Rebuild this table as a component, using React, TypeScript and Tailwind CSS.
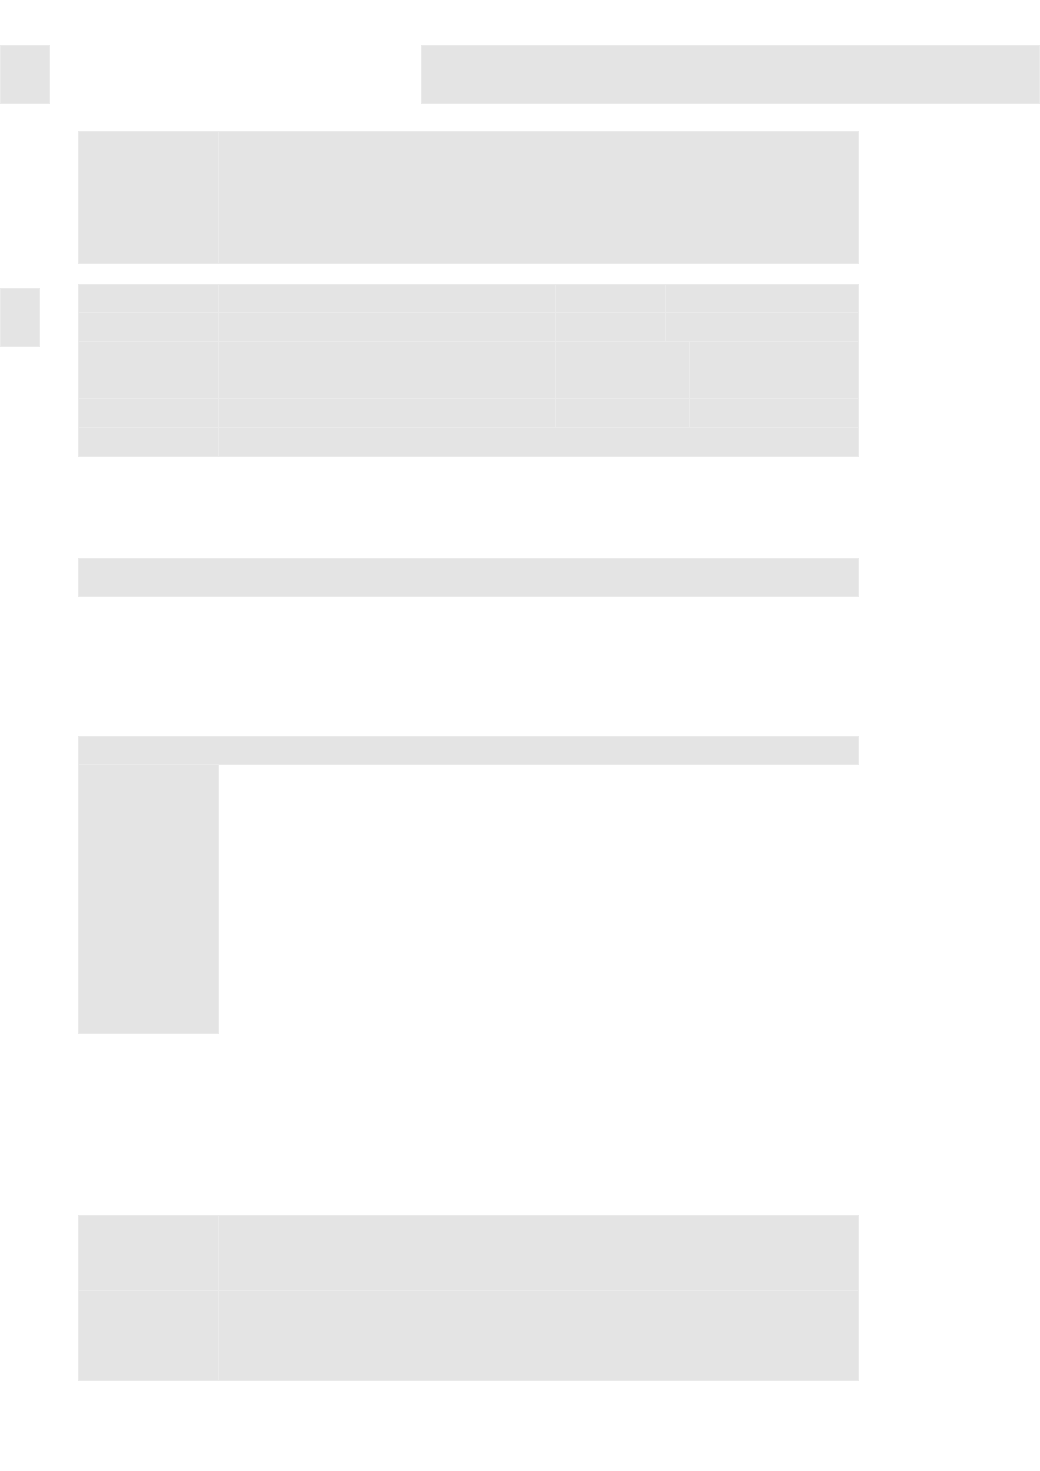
const cell = "bg-[#e4e4e4] border-[#eaeaea]";

export default function App() {
  return (
    <div className="min-h-[1471px] w-[1040px] bg-white pt-[45px]">
      {/* Top bar placeholders */}
      <div className="flex h-[59px] justify-between">
        <div className={`w-[50px] border ${cell}`} />
        <div className={`w-[619px] border ${cell}`} />
      </div>

      {/* Hero block */}
      <div className={`ml-[78px] mt-[27px] flex h-[133px] w-[781px] border ${cell}`}>
        <div className={`w-[140px] border-r ${cell}`} />
        <div className="flex-1" />
      </div>

      {/* Table with side marker */}
      <div className="mt-[20px] flex items-start gap-[38px]">
        <div className={`mt-[4px] h-[59px] w-[40px] border ${cell}`} />
        <div className={`flex w-[781px] flex-col border ${cell}`}>
          <div className={`flex h-[28px] border-b ${cell}`}>
            <div className={`w-[140px] border-r ${cell}`} />
            <div className={`w-[337px] border-r ${cell}`} />
            <div className={`w-[110px] border-r ${cell}`} />
            <div className="flex-1" />
          </div>
          <div className={`flex h-[29px] border-b ${cell}`}>
            <div className={`w-[140px] border-r ${cell}`} />
            <div className={`w-[337px] border-r ${cell}`} />
            <div className={`w-[110px] border-r ${cell}`} />
            <div className="flex-1" />
          </div>
          <div className={`flex h-[57px] border-b ${cell}`}>
            <div className={`w-[140px] border-r ${cell}`} />
            <div className={`w-[337px] border-r ${cell}`} />
            <div className={`w-[134px] border-r ${cell}`} />
            <div className="flex-1" />
          </div>
          <div className={`flex h-[29px] border-b ${cell}`}>
            <div className={`w-[140px] border-r ${cell}`} />
            <div className={`w-[337px] border-r ${cell}`} />
            <div className={`w-[134px] border-r ${cell}`} />
            <div className="flex-1" />
          </div>
          <div className="flex h-[28px]">
            <div className={`w-[140px] border-r ${cell}`} />
            <div className="flex-1" />
          </div>
        </div>
      </div>

      {/* Single bar */}
      <div className={`ml-[78px] mt-[101px] h-[39px] w-[781px] border ${cell}`} />

      {/* Header with left column */}
      <div className="ml-[78px] mt-[139px] w-[781px]">
        <div className={`h-[29px] border ${cell}`} />
        <div className={`h-[269px] w-[141px] border border-t-0 ${cell}`} />
      </div>

      {/* Bottom two-row block */}
      <div className={`ml-[78px] mt-[181px] flex w-[781px] flex-col border ${cell}`}>
        <div className={`flex h-[75px] border-b ${cell}`}>
          <div className={`w-[140px] border-r ${cell}`} />
          <div className="flex-1" />
        </div>
        <div className="flex h-[89px]">
          <div className={`w-[140px] border-r ${cell}`} />
          <div className="flex-1" />
        </div>
      </div>
    </div>
  );
}
